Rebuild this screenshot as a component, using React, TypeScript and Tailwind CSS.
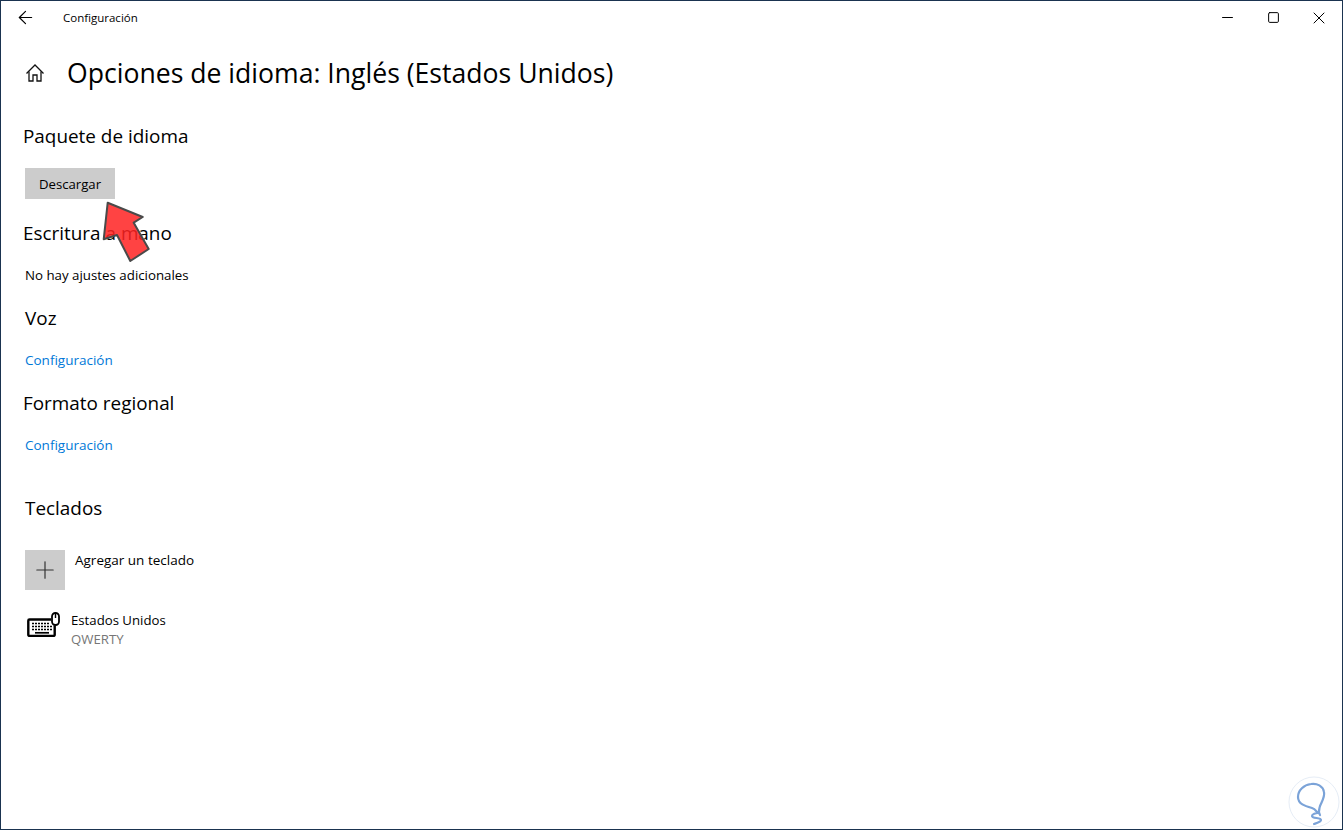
import { ArrowLeft, Minus, Plus, Square, X } from "lucide-react"

const font = "font-['Open_Sans','Noto_Sans',sans-serif]"

function HomeIcon() {
  return (
    <svg width="20" height="20" viewBox="0 0 20 20" fill="none" stroke="#111" strokeWidth="1.300">
      <path d="M1.500 10.500 10 2l8.500 8.500" />
      <path d="M4 8.500V18h4v-6h4v6h4V8.500" />
    </svg>
  )
}

function KeyboardIcon() {
  return (
    <svg width="33" height="26" viewBox="0 0 33 26" fill="none" stroke="#000">
      <path d="M24 7.500H2.500a1.200 1.200 0 0 0-1.200 1.200v14a1.200 1.200 0 0 0 1.200 1.200h24a1.200 1.200 0 0 0 1.200-1.200V13.500" strokeWidth="2.400" />
      <rect x="25" y="1" width="7" height="12" rx="3.400" strokeWidth="1.800" />
      <path d="M28.500 2v4" strokeWidth="1.400" />
      <path d="M5 11.500h18M5 14.500h20M5 17.500h20" strokeWidth="1.700" strokeDasharray="2 1" />
      <path d="M8 20.800h14" strokeWidth="1.700" />
    </svg>
  )
}

function Section({ title, children }: { title: string; children: React.ReactNode }) {
  return (
    <section>
      <h2 className="text-[18.900px] leading-[24px] text-black">{title}</h2>
      {children}
    </section>
  )
}

export default function App() {
  return (
    <div className={`${font} relative flex h-[830px] w-[1343px] flex-col overflow-hidden border border-[#1a3350] bg-white text-black`}>
      <header className="flex h-[33px] items-center">
        <ArrowLeft size={21} strokeWidth={1.200} absoluteStrokeWidth className="ml-[14px]" />
        <span className="ml-[27px] text-[11.500px]">Configuración</span>
        <div className="ml-auto flex items-center">
          <div className="flex w-[46px] justify-center"><Minus size={17} strokeWidth={1} absoluteStrokeWidth /></div>
          <div className="flex w-[46px] justify-center"><Square size={13} strokeWidth={1} absoluteStrokeWidth /></div>
          <div className="flex w-[46px] justify-center"><X size={20} strokeWidth={1} absoluteStrokeWidth /></div>
        </div>
      </header>

      <div className="mt-[17px] flex items-center">
        <div className="ml-[24px]"><HomeIcon /></div>
        <h1 className="ml-[22px] text-[26.600px] leading-[44px]">Opciones de idioma: Inglés (Estados Unidos)</h1>
      </div>

      <div className="mt-[29px] flex flex-col pl-[22px]">
        <Section title="Paquete de idioma">
          <button className="mt-[20px] ml-[2px] block h-[31px] w-[90px] bg-[#cccccc] pt-[3px] text-[13.200px]">Descargar</button>
        </Section>
        <div className="mt-[22px]">
          <Section title="Escritura a mano">
            <p className="mt-[21px] ml-[2px] text-[13.300px] leading-[18px]">No hay ajustes adicionales</p>
          </Section>
        </div>
        <div className="mt-[22px] pl-[2px]">
          <Section title="Voz">
            <a className="mt-[21px] block text-[13.500px] leading-[18px] text-[#0078d7]">Configuración</a>
          </Section>
        </div>
        <div className="mt-[22px]">
          <Section title="Formato regional">
            <a className="mt-[21px] ml-[2px] block text-[13.500px] leading-[18px] text-[#0078d7]">Configuración</a>
          </Section>
        </div>
        <div className="mt-[42px] pl-[2px]">
          <Section title="Teclados">
            <div className="mt-[30px] flex items-start gap-[10px]">
              <div className="flex h-[40px] w-[40px] items-center justify-center bg-[#cccccc]">
                <Plus size={28} strokeWidth={1.200} absoluteStrokeWidth color="#333" />
              </div>
              <span className="text-[13.500px] leading-[20px]">Agregar un teclado</span>
            </div>
            <div className="mt-[21px] flex items-start">
              <div className="mt-[1px] ml-[2px]"><KeyboardIcon /></div>
              <div className="ml-[11px] text-[13.200px] leading-[19px]">
                <div>Estados Unidos</div>
                <div className="text-[#767676]">QWERTY</div>
              </div>
            </div>
          </Section>
        </div>
      </div>

      {/* red pointer over the button */}
      <svg className="absolute left-[99px] top-[197px]" width="52" height="66" viewBox="99 197 52 66">
        <path d="M106.700 201.700 141.700 216 132.700 221.700 147.700 248 129.300 260 116 234 102.700 238.300Z" fill="#ff2222" fillOpacity="0.85" stroke="#4a4a4a" strokeWidth="2" strokeLinejoin="round" />
      </svg>

      {/* watermark */}
      <svg className="absolute left-[1287px] top-[775px]" width="54" height="54" viewBox="0 0 54 54" fill="none">
        <circle cx="26" cy="26" r="25" stroke="#e6edf6" />
        <path d="M32 39c-2-3-1-5 0-9 2-5 5-9 4-14-1-6-7-9-13-8C16 9 10 14 10 21c0 7 7 9 14 11 3 1 4 3 6 5-2 0-6 1-6 3 0 3 9 1 9 4 0 2-4 3-7 4" stroke="#7ba3d8" strokeWidth="2.200" strokeLinecap="round" />
      </svg>
    </div>
  )
}
